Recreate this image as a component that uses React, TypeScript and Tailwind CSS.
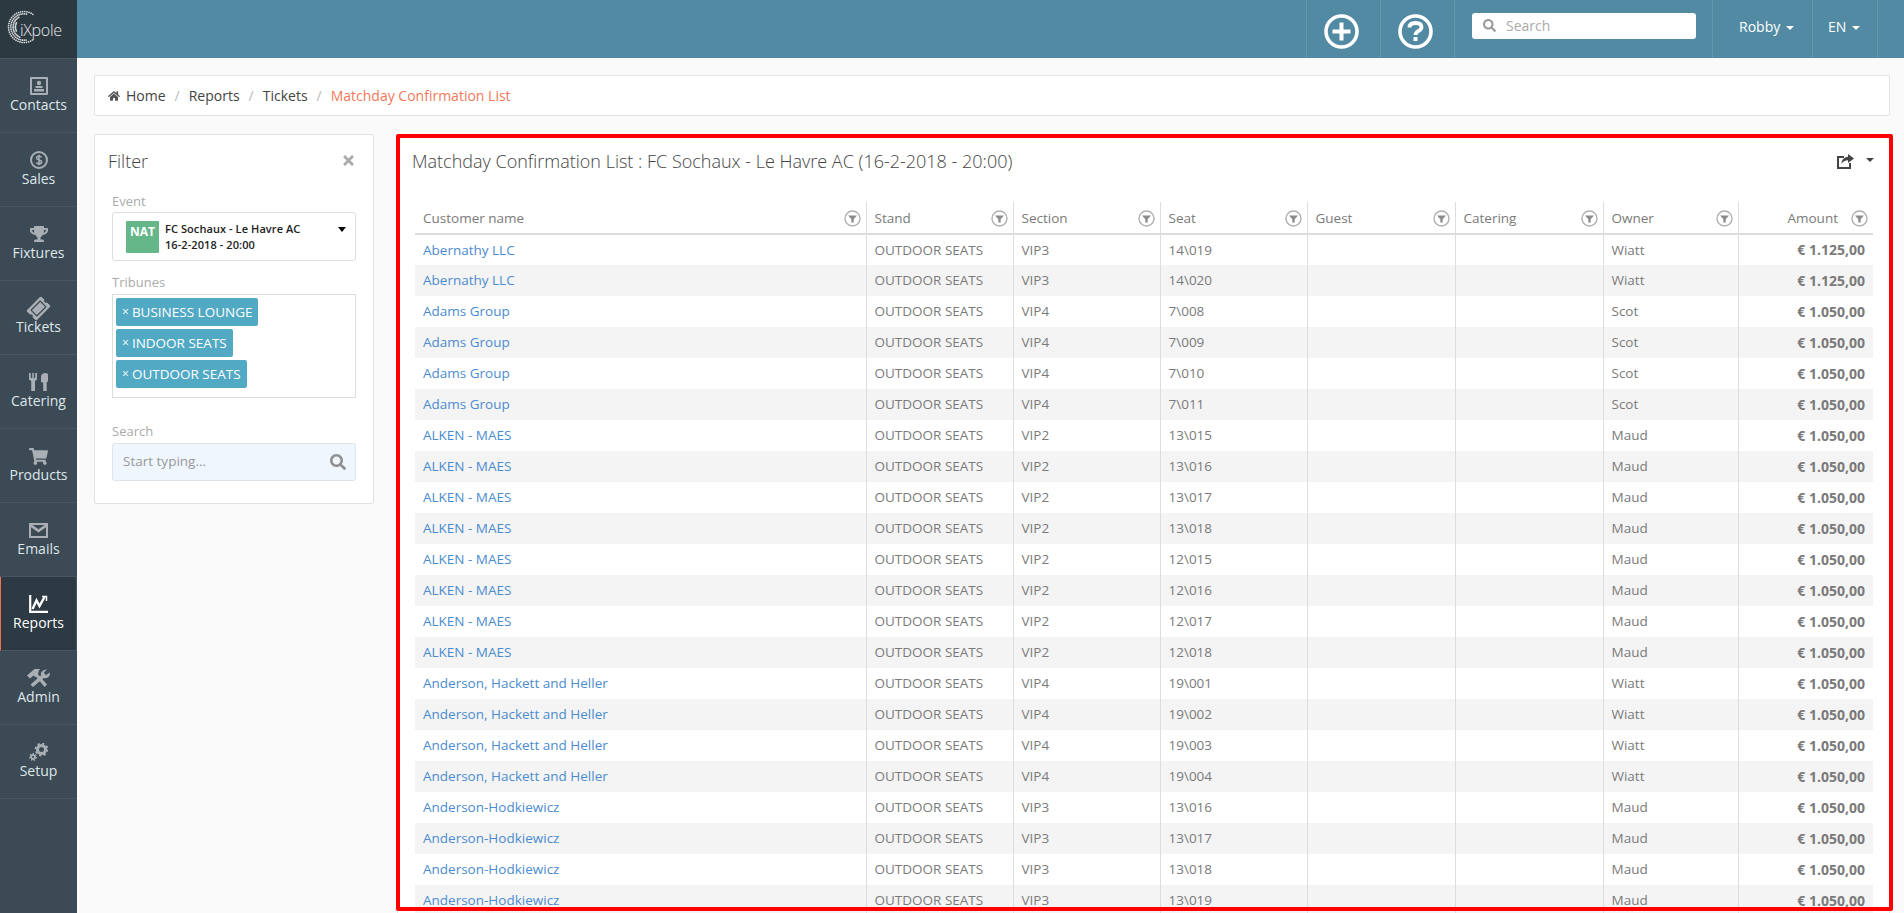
import { FaHome, FaSearch, FaShoppingCart, FaTicketAlt, FaTimes, FaTrophy } from 'react-icons/fa'
import type { ReactNode } from 'react'

type Row = { name: string; section: string; seat: string; owner: string; amount: string }

const rows: Row[] = [
  { name: 'Abernathy LLC', section: 'VIP3', seat: '14\\019', owner: 'Wiatt', amount: '€ 1.125,00' },
  { name: 'Abernathy LLC', section: 'VIP3', seat: '14\\020', owner: 'Wiatt', amount: '€ 1.125,00' },
  { name: 'Adams Group', section: 'VIP4', seat: '7\\008', owner: 'Scot', amount: '€ 1.050,00' },
  { name: 'Adams Group', section: 'VIP4', seat: '7\\009', owner: 'Scot', amount: '€ 1.050,00' },
  { name: 'Adams Group', section: 'VIP4', seat: '7\\010', owner: 'Scot', amount: '€ 1.050,00' },
  { name: 'Adams Group', section: 'VIP4', seat: '7\\011', owner: 'Scot', amount: '€ 1.050,00' },
  { name: 'ALKEN - MAES', section: 'VIP2', seat: '13\\015', owner: 'Maud', amount: '€ 1.050,00' },
  { name: 'ALKEN - MAES', section: 'VIP2', seat: '13\\016', owner: 'Maud', amount: '€ 1.050,00' },
  { name: 'ALKEN - MAES', section: 'VIP2', seat: '13\\017', owner: 'Maud', amount: '€ 1.050,00' },
  { name: 'ALKEN - MAES', section: 'VIP2', seat: '13\\018', owner: 'Maud', amount: '€ 1.050,00' },
  { name: 'ALKEN - MAES', section: 'VIP2', seat: '12\\015', owner: 'Maud', amount: '€ 1.050,00' },
  { name: 'ALKEN - MAES', section: 'VIP2', seat: '12\\016', owner: 'Maud', amount: '€ 1.050,00' },
  { name: 'ALKEN - MAES', section: 'VIP2', seat: '12\\017', owner: 'Maud', amount: '€ 1.050,00' },
  { name: 'ALKEN - MAES', section: 'VIP2', seat: '12\\018', owner: 'Maud', amount: '€ 1.050,00' },
  { name: 'Anderson, Hackett and Heller', section: 'VIP4', seat: '19\\001', owner: 'Wiatt', amount: '€ 1.050,00' },
  { name: 'Anderson, Hackett and Heller', section: 'VIP4', seat: '19\\002', owner: 'Wiatt', amount: '€ 1.050,00' },
  { name: 'Anderson, Hackett and Heller', section: 'VIP4', seat: '19\\003', owner: 'Wiatt', amount: '€ 1.050,00' },
  { name: 'Anderson, Hackett and Heller', section: 'VIP4', seat: '19\\004', owner: 'Wiatt', amount: '€ 1.050,00' },
  { name: 'Anderson-Hodkiewicz', section: 'VIP3', seat: '13\\016', owner: 'Maud', amount: '€ 1.050,00' },
  { name: 'Anderson-Hodkiewicz', section: 'VIP3', seat: '13\\017', owner: 'Maud', amount: '€ 1.050,00' },
  { name: 'Anderson-Hodkiewicz', section: 'VIP3', seat: '13\\018', owner: 'Maud', amount: '€ 1.050,00' },
  { name: 'Anderson-Hodkiewicz', section: 'VIP3', seat: '13\\019', owner: 'Maud', amount: '€ 1.050,00' },
]

const columns = [
  { label: 'Customer name', width: 'w-[451px]' },
  { label: 'Stand', width: 'w-[147px]' },
  { label: 'Section', width: 'w-[147px]' },
  { label: 'Seat', width: 'w-[147px]' },
  { label: 'Guest', width: 'w-[148px]' },
  { label: 'Catering', width: 'w-[148px]' },
  { label: 'Owner', width: 'w-[135px]' },
]

function ContactsIcon() {
  return (
    <svg width="18" height="18" viewBox="0 0 18 18" fill="currentColor">
      <path fillRule="evenodd" d="M1 0h16a1 1 0 0 1 1 1v16a1 1 0 0 1-1 1H1a1 1 0 0 1-1-1V1a1 1 0 0 1 1-1zm1 2v14h14V2H2z" />
      <circle cx="9" cy="6" r="2.2" />
      <path d="M5.5 9h7v2h-7zM4 12h10v2.5H4z" />
    </svg>
  )
}

function SalesIcon() {
  return (
    <svg width="18" height="18" viewBox="0 0 18 18" fill="none" stroke="currentColor">
      <circle cx="9" cy="9" r="8" strokeWidth="2" />
      <path d="M11.6 6.4C11 5.5 10.100 5.200 9 5.200c-1.300 0-2.500.6-2.500 1.900S7.700 8.700 9 9s2.600.7 2.600 1.900-1.200 1.900-2.600 1.900c-1.200 0-2.100-.4-2.700-1.300M9 3.800v10.400" strokeWidth="1.5" />
    </svg>
  )
}

function CateringIcon() {
  return (
    <svg width="19" height="18" viewBox="0 0 19 18" fill="currentColor">
      <path d="M0 0h1.800v5h1.400V0h1.600v5h1.400V0H8v6.500L6 8v10H2.200V8L0 6.500z" />
      <path d="M12 8.500V4c0-2.500 1.800-4 5-4 1.300 0 2 1 2 2.500V8c0 .8-.5 1-1.300 1v9h-3.500V9.500c-1.200 0-2.200-.2-2.200-1z" />
    </svg>
  )
}

function MailIcon() {
  return (
    <svg width="19" height="15" viewBox="0 0 19 15" fill="currentColor">
      <path fillRule="evenodd" d="M0 0h19v15H0V0zm2 4.200V13h15V4.200L9.500 9.400 2 4.200zM3.400 2l6.100 4.300L15.600 2H3.400z" />
    </svg>
  )
}

function ReportsIcon() {
  return (
    <svg width="19" height="18" viewBox="0 0 19 18" fill="none" stroke="currentColor">
      <path d="M1.200 0v16.800H19" strokeWidth="2.200" />
      <path d="M3.500 14L7.500 5.500 10.500 11 15.500 2" strokeWidth="2.400" />
      <path d="M13 1.500h4.500V6" strokeWidth="1.500" />
    </svg>
  )
}

function AdminIcon() {
  return (
    <svg width="24" height="18" viewBox="0 0 24 18" fill="currentColor">
      <path d="M0 6.500L7.500 0h5.500l-1.500 2.500L11 6 8.500 8 6.500 6.500 3 9.500z" />
      <path d="M8.500 7l2.200-2L20 15.500 17.500 18z" />
      <path d="M3.500 15.500L14 6.500c-.8-3 1.800-6.200 6-6L16.800 3.500l2 2.800L22.800 3.500c.8 3.500-2.500 6.500-6 5.500L6 18z" />
    </svg>
  )
}

function SetupIcon() {
  return (
    <svg width="19" height="18" viewBox="0 0 19 18" fill="none" stroke="currentColor">
      <circle cx="12.500" cy="6.500" r="4" strokeWidth="3" />
      <circle cx="12.500" cy="6.500" r="6" strokeWidth="1.800" strokeDasharray="2.200 2.500" />
      <circle cx="4" cy="14" r="2" strokeWidth="1.800" />
      <circle cx="4" cy="14" r="3.400" strokeWidth="1.200" strokeDasharray="1.500 1.500" />
    </svg>
  )
}

function ShareIcon() {
  return (
    <svg width="18" height="15" viewBox="0 0 18 15" fill="#444444">
      <path d="M0 2h7v2H2v9h10V9h2v6H0z" />
      <path d="M11 0l6 4.500L11 9V6.300C8 6.300 6 7.500 4.500 10 4.500 6 7 3 11 2.700z" />
    </svg>
  )
}

function NavItem({ icon, label, active }: { icon: ReactNode; label: string; active?: boolean }) {
  return (
    <div
      className={`flex h-[74px] flex-col items-center border-b border-[#485661] pt-[18px] ${
        active ? 'border-l border-r border-l-[#f0704f] border-r-[#485661] bg-[#2d3a43] text-white' : 'text-[#a9afb4]'
      }`}
    >
      <div className="flex h-[18px] items-center justify-center">{icon}</div>
      <span className={`text-sm leading-[19px] ${active ? 'text-white' : 'text-[#dfe6ea]'}`}>{label}</span>
    </div>
  )
}

function Logo() {
  const dots: ReactNode[] = []
  for (let deg = 55; deg <= 305; deg += 8) {
    const a = (deg * Math.PI) / 180
    // the arc is thickest on the left and thins out towards both ends
    const rings = Math.max(1, Math.round(4.4 - Math.abs(deg - 180) / 36))
    for (let ring = 0; ring < rings; ring++) {
      const r = 15.5 - ring * 2.3
      dots.push(<circle key={`${deg}-${ring}`} cx={24 + r * Math.cos(a)} cy={27 - r * Math.sin(a)} r={0.85} fill="#d8dcdf" />)
    }
  }
  return (
    <div className="relative h-[59px] border-b border-[#485661] bg-[#2c3941]">
      <svg width="77" height="59" viewBox="0 0 77 59" className="absolute left-0 top-0">
        {dots}
      </svg>
      <span className="absolute left-[20px] top-[18px] text-[16px] leading-[24px] font-light tracking-[-0.3px] text-[#e4e7e9]">iXpole</span>
    </div>
  )
}

function FilterDot() {
  return (
    <svg width="17" height="17" viewBox="0 0 17 17" className="shrink-0">
      <circle cx="8.500" cy="8.500" r="7.500" fill="none" stroke="#b0b0b0" strokeWidth="1.400" />
      <path d="M4 5.400h9L9.700 9.200v3.400H7.300V9.200z" fill="#8c8c8c" />
    </svg>
  )
}

function CircleAction({ kind }: { kind: 'plus' | 'help' }) {
  return (
    <svg width="35" height="35" viewBox="0 0 35 35" fill="none" stroke="#ffffff">
      <circle cx="17.500" cy="17.500" r="15.500" strokeWidth="3.600" />
      {kind === 'plus' ? (
        <path d="M17.500 8.500v18M8.500 17.500h18" strokeWidth="4" />
      ) : (
        <>
          <path d="M11.500 13.500c0-3 2.500-4.500 6-4.500s6 1.500 6 4.200c0 4-6 3.600-6 7.800" strokeWidth="3.800" />
          <path d="M17.500 23v4" strokeWidth="4" />
        </>
      )}
    </svg>
  )
}

function Header() {
  return (
    <header className="flex h-[58px] shrink-0 justify-end bg-[#528aa3] pr-[26px] text-white">
      <div className="flex w-[74px] items-center justify-center border-l border-[#6399af] pr-[4px] pt-[4px]">
        <CircleAction kind="plus" />
      </div>
      <div className="flex w-[74px] items-center justify-center border-l border-[#6399af] pr-[4px] pt-[4px]">
        <CircleAction kind="help" />
      </div>
      <div className="w-[258px] border-l border-[#6399af] pl-[17px] pt-[13px]">
        <div className="flex h-[26px] w-[224px] items-center rounded-[3px] bg-white pb-[1px] pl-[11px] text-sm text-[#aaaaaa]">
          <FaSearch className="mr-[10px] text-[13px] text-[#999999]" />
          Search
        </div>
      </div>
      <div className="flex w-[100px] items-center border-l border-[#6399af] pb-[5px] pl-[26px] text-sm">
        Robby
        <span className="ml-[6px] mt-[2px] border-x-[4px] border-t-[4px] border-x-transparent border-t-white" />
      </div>
      <div className="flex w-[66px] items-center border-x border-[#6399af] pb-[5px] pl-[15px] text-sm">
        EN
        <span className="ml-[6px] mt-[2px] border-x-[4px] border-t-[4px] border-x-transparent border-t-white" />
      </div>
    </header>
  )
}

function Breadcrumb() {
  return (
    <nav className="flex h-[41px] items-center rounded-[2px] border border-[#e3e3e3] bg-white pl-[13px] text-sm text-[#444444]">
      <FaHome className="mr-[6px] text-[12px] text-[#555555]" />
      <span>Home</span>
      <span className="mx-[9px] text-[#bbbbbb]">/</span>
      <span>Reports</span>
      <span className="mx-[9px] text-[#bbbbbb]">/</span>
      <span>Tickets</span>
      <span className="mx-[9px] text-[#bbbbbb]">/</span>
      <span className="text-[#f0785a]">Matchday Confirmation List</span>
    </nav>
  )
}

function Tag({ label }: { label: string }) {
  return (
    <div className="flex h-[28px] items-center self-start rounded-[2px] bg-[#51a9c4] pl-[6px] pr-[6px] text-[13.5px] text-white">
      <span className="mr-[3px] text-[12px]">×</span>
      {label}
    </div>
  )
}

function FilterPanel() {
  return (
    <aside className="h-[370px] w-[280px] shrink-0 rounded-[2px] border border-[#e3e3e3] bg-white pl-[17px] pr-[17px]">
      <div className="flex h-[52px] items-center justify-between pb-[1px]">
        <h2 className="-ml-[4px] text-lg font-light text-[#444444]">Filter</h2>
        <FaTimes className="text-[15px] text-[#aaaaaa]" />
      </div>
      <label className="mt-[5px] block text-[13px] leading-[18px] text-[#aaaaaa]">Event</label>
      <div className="relative mt-[2px] flex h-[49px] items-center rounded-[3px] border border-[#dddddd] pl-[13px]">
        <div className="h-[32px] w-[33px] rounded-[1px] bg-[#65b78a] pt-[3px] text-center text-xs leading-[16px] font-bold text-white">NAT</div>
        <div className="ml-[6px] text-[11px] leading-[16px] font-semibold tracking-[0.08px] text-[#222222]">
          <div>FC Sochaux - Le Havre AC</div>
          <div>16-2-2018 - 20:00</div>
        </div>
        <span className="absolute right-[9px] top-[14px] border-x-[4px] border-t-[5px] border-x-transparent border-t-black" />
      </div>
      <label className="mt-[12px] block text-[13px] leading-[18px] text-[#aaaaaa]">Tribunes</label>
      <div className="mt-[3px] flex h-[104px] flex-col gap-[3px] border border-[#dddddd] pl-[3px] pt-[3px]">
        <Tag label="BUSINESS LOUNGE" />
        <Tag label="INDOOR SEATS" />
        <Tag label="OUTDOOR SEATS" />
      </div>
      <label className="mt-[24px] block text-[13px] leading-[18px] text-[#aaaaaa]">Search</label>
      <div className="mt-[3px] flex h-[38px] items-center justify-between rounded-[3px] border border-[#dde4ea] bg-[#eff6fd] pb-[1px] pl-[10px] pr-[9px] text-[13.5px] text-[#999999]">
        Start typing...
        <FaSearch className="text-[16px] text-[#8f8f8f]" />
      </div>
    </aside>
  )
}

function ReportTable() {
  return (
    <table className="w-[1457px] table-fixed border-collapse text-[13.5px] text-[#7a7a7a]">
      <thead>
        <tr className="h-[32px] border-b-2 border-[#dddddd]">
          {columns.map((col, i) => (
            <th key={col.label} className={`${col.width} px-0 pt-[2px] font-normal ${i > 0 ? 'border-l border-[#dddddd]' : ''}`}>
              <div className="flex items-center justify-between pl-[8px] pr-[5px]">
                {col.label}
                <FilterDot />
              </div>
            </th>
          ))}
          <th className="w-[135px] border-l border-[#dddddd] pt-[2px] font-normal">
            <div className="flex items-center justify-end gap-[13px] pr-[5px]">
              Amount
              <FilterDot />
            </div>
          </th>
        </tr>
      </thead>
      <tbody>
        {rows.map((row, i) => (
          <tr key={i} className={`h-[31px] ${i % 2 === 1 ? 'bg-[#f4f4f4]' : 'bg-white'}`}>
            <td className="pl-[8px] text-[#4b8bd0]">{row.name}</td>
            <td className="border-l border-[#dddddd] pl-[8px]">OUTDOOR SEATS</td>
            <td className="border-l border-[#dddddd] pl-[8px]">{row.section}</td>
            <td className="border-l border-[#dddddd] pl-[8px]">{row.seat}</td>
            <td className="border-l border-[#dddddd]" />
            <td className="border-l border-[#dddddd]" />
            <td className="border-l border-[#dddddd] pl-[8px]">{row.owner}</td>
            <td className="border-l border-[#dddddd] pr-[8px] text-right text-sm font-bold">{row.amount}</td>
          </tr>
        ))}
      </tbody>
    </table>
  )
}

export default function App() {
  return (
    <div className="flex h-[913px] overflow-hidden bg-[#fafafa] font-['Open_Sans',sans-serif]">
      <div className="w-[77px] shrink-0 bg-[#3b4a55]">
        <Logo />
        <NavItem icon={<ContactsIcon />} label="Contacts" />
        <NavItem icon={<SalesIcon />} label="Sales" />
        <NavItem icon={<FaTrophy className="text-[18px]" />} label="Fixtures" />
        <NavItem icon={<FaTicketAlt className="-rotate-45 text-[21px]" />} label="Tickets" />
        <NavItem icon={<CateringIcon />} label="Catering" />
        <NavItem icon={<FaShoppingCart className="text-[19px]" />} label="Products" />
        <NavItem icon={<MailIcon />} label="Emails" />
        <NavItem icon={<ReportsIcon />} label="Reports" active />
        <NavItem icon={<AdminIcon />} label="Admin" />
        <NavItem icon={<SetupIcon />} label="Setup" />
      </div>
      <div className="flex min-w-0 flex-1 flex-col">
        <Header />
        <div className="pl-[17px] pr-[14px] pt-[17px]">
          <Breadcrumb />
          <div className="mt-[18px] flex gap-[23px]">
            <FilterPanel />
            <section className="relative h-[800px] flex-1 rounded-[2px] border border-[#e3e3e3] bg-white pl-[17px]">
              <div className="flex h-[67px] items-center justify-between pb-[15px] pr-[15px]">
                <h1 className="-ml-[3px] text-lg font-light text-[#444444]">
                  Matchday Confirmation List : FC Sochaux - Le Havre AC (16-2-2018 - 20:00)
                </h1>
                <div className="flex items-center gap-[11px]">
                  <ShareIcon />
                  <span className="mb-[3px] border-x-[4px] border-t-[4px] border-x-transparent border-t-[#444444]" />
                </div>
              </div>
              <ReportTable />
              <div className="pointer-events-none absolute -left-[2px] -top-[1px] h-[777px] w-[1497px] rounded-[2px] border-[4px] border-[#ff0000]" />
            </section>
          </div>
        </div>
      </div>
    </div>
  )
}
